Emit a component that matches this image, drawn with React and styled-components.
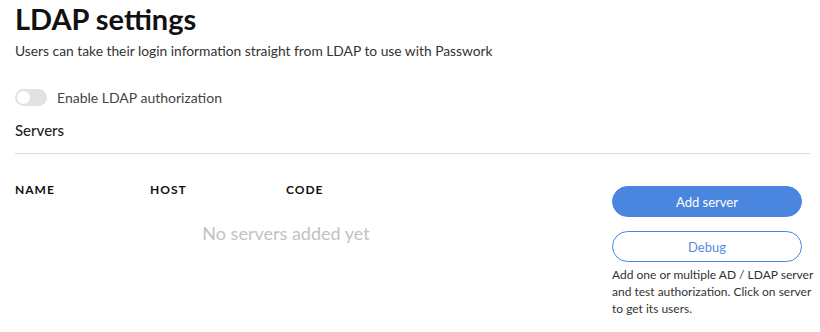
import React from 'react';
import styled, { createGlobalStyle } from 'styled-components';

const GlobalStyle = createGlobalStyle`
  body {
    margin: 0;
    background: #ffffff;
    font-family: Lato, "Open Sans", sans-serif;
    color: #222;
  }
`;

const Page = styled.div`
  width: 820px;
  height: 332px;
  box-sizing: border-box;
  padding: 0 10px 0 15px;
  overflow: hidden;
`;

const Title = styled.h1`
  margin: 0;
  padding-top: 2px;
  font-size: 29px;
  line-height: 34px;
  font-weight: 700;
  color: #111;
`;

const Subtitle = styled.p`
  margin: 6px 0 0;
  font-size: 13.8px;
  line-height: 18px;
  color: #333;
`;

const ToggleRow = styled.label`
  display: flex;
  align-items: center;
  gap: 10px;
  margin-top: 29px;
  font-size: 14px;
  color: #444;
`;

const Switch = styled.span`
  position: relative;
  width: 32px;
  height: 17px;
  border-radius: 9px;
  background: ${p => (p.on ? '#4a86e0' : '#e2e2e2')};

  &::after {
    content: '';
    position: absolute;
    top: 2px;
    left: ${p => (p.on ? '17px' : '2px')};
    width: 13px;
    height: 13px;
    border-radius: 50%;
    background: #fff;
  }
`;

const SectionTitle = styled.h2`
  margin: 14px 0 0;
  padding-bottom: 13px;
  font-size: 15px;
  line-height: 20px;
  font-weight: 500;
  color: #222;
  border-bottom: 1px solid #dcdcdc;
`;

const Body = styled.div`
  display: grid;
  grid-template-columns: 542px 205px;
  column-gap: 55px;
  margin-top: 28px;
`;

const Table = styled.div`
  display: flex;
  flex-direction: column;
`;

const HeadRow = styled.div`
  display: grid;
  grid-template-columns: 135px 136px 1fr;
  line-height: 16px;
`;

const HeadCell = styled.span`
  font-size: 12px;
  font-weight: 700;
  letter-spacing: 1px;
  color: #111;
`;

const Empty = styled.div`
  margin-top: 24px;
  text-align: center;
  font-size: 18px;
  color: #c2c2c2;
`;

const Side = styled.div`
  display: flex;
  flex-direction: column;
  align-items: flex-start;
  padding-top: 4px;
`;

const Button = styled.button`
  width: 190px;
  height: 31px;
  border-radius: 16px;
  font-family: inherit;
  font-size: 13px;
  border: 1px solid #4a86e0;
  background: ${p => (p.primary ? '#4a86e0' : '#fff')};
  color: ${p => (p.primary ? '#fff' : '#5b8ae0')};
  margin-bottom: ${p => (p.primary ? '14px' : '4px')};
  cursor: pointer;
`;

const Hint = styled.p`
  margin: 0;
  font-size: 12px;
  line-height: 17px;
  color: #333;
`;

export default function App() {
  return (
    <Page>
      <GlobalStyle />
      <Title>LDAP settings</Title>
      <Subtitle>Users can take their login information straight from LDAP to use with Passwork</Subtitle>
      <ToggleRow>
        <Switch />
        Enable LDAP authorization
      </ToggleRow>
      <SectionTitle>Servers</SectionTitle>
      <Body>
        <Table>
          <HeadRow>
            <HeadCell>NAME</HeadCell>
            <HeadCell>HOST</HeadCell>
            <HeadCell>CODE</HeadCell>
          </HeadRow>
          <Empty>No servers added yet</Empty>
        </Table>
        <Side>
          <Button primary>Add server</Button>
          <Button>Debug</Button>
          <Hint>Add one or multiple AD / LDAP server and test authorization. Click on server to get its users.</Hint>
        </Side>
      </Body>
    </Page>
  );
}
